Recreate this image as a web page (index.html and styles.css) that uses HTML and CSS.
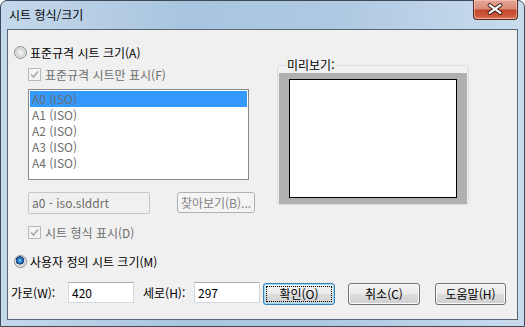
FILE: index.html
```html
<!DOCTYPE html>
<html lang="ko">
<head>
    <meta charset="utf-8">
    <title>시트 형식/크기</title>
    <link rel="stylesheet" href="styles.css">
</head>
<body>
<div class="window">
    <div class="titlebar">
        <span class="title">시트 형식/크기</span>
        <span class="close">
            <svg width="45" height="20" viewBox="0 0 45 20">
                <path d="M17 6 L28 14 M28 6 L17 14" stroke="#3a1a14" stroke-width="4.2" stroke-linecap="round"/>
                <path d="M17 6 L28 14 M28 6 L17 14" stroke="#fff" stroke-width="2.2" stroke-linecap="round"/>
            </svg>
        </span>
    </div>

    <div class="client">
        <div class="main">
            <div class="left">
                <div class="opt first"><span class="radio"></span>표준규격 시트 크기(A)</div>

                <div class="opt sub disabled">
                    <span class="check"><svg width="11" height="11" viewBox="0 0 11 11"><path d="M2 5.5 L4.5 8 L9 2.5" fill="none" stroke="#a8a8a8" stroke-width="1.6"/></svg></span>표준규격 시트만 표시(F)
                </div>

                <div class="listbox">
                    <div class="item sel">A0 (ISO)</div>
                    <div class="item">A1 (ISO)</div>
                    <div class="item">A2 (ISO)</div>
                    <div class="item">A3 (ISO)</div>
                    <div class="item">A4 (ISO)</div>
                </div>

                <div class="filerow">
                    <div class="field">a0 - iso.slddrt</div>
                    <div class="browse">찾아보기(B)...</div>
                </div>

                <div class="opt sub disabled gapD">
                    <span class="check"><svg width="11" height="11" viewBox="0 0 11 11"><path d="M2 5.5 L4.5 8 L9 2.5" fill="none" stroke="#a8a8a8" stroke-width="1.6"/></svg></span>시트 형식 표시(D)
                </div>

                <div class="opt gapM"><span class="radio on"></span>사용자 정의 시트 크기(M)</div>
            </div>

            <div class="preview">
                <span class="legend">미리보기:</span>
                <div class="paper">
                    <div class="sheet"></div>
                </div>
            </div>
        </div>

        <div class="bottom">
            <span class="lbl w1">가로(W):</span>
            <div class="input">420</div>
            <span class="lbl w2">세로(H):</span>
            <div class="input">297</div>
            <div class="btn default b1">확인(O)</div>
            <div class="btn b2">취소(C)</div>
            <div class="btn b3">도움말(H)</div>
        </div>
    </div>
</div>
</body>
</html>
```

FILE: styles.css
```css
* {
    margin: 0;
    padding: 0;
    box-sizing: border-box;
}

body {
    width: 525px;
    height: 327px;
    overflow: hidden;
    background: #fff;
    font-family: "Noto Sans CJK KR", "Noto Sans", sans-serif;
    font-size: 12px;
    color: #000;
}

.window {
    width: 525px;
    height: 327px;
    border: 1px solid #3e4a58;
    border-radius: 7px 7px 0 0;
    background: linear-gradient(to right, #c4d8eb 0%, #a9c5df 35%, #afc9e2 65%, #c9dcee 100%);
    padding: 0 6px 6px;
    display: flex;
    flex-direction: column;
}

.titlebar {
    height: 28px;
    display: flex;
    align-items: flex-start;
    flex: none;
}

.title {
    line-height: 28px;
    padding-left: 2px;
}

.close {
    margin-left: auto;
    margin-top: -1px;
    width: 45px;
    height: 20px;
    border: 1px solid #5a2a22;
    border-top: none;
    border-radius: 0 0 4px 4px;
    background: linear-gradient(#e6a596 0%, #d98a76 48%, #c4452a 52%, #cd5a3c 85%, #e0866a 100%);
    box-shadow: inset 0 0 0 1px rgba(255, 220, 210, 0.45);
    display: flex;
}

.close svg {
    margin: -1px 0 0 -1px;
}

.client {
    flex: 1;
    border: 1px solid #5a6676;
    background: #f0f0f0;
}

.main {
    display: flex;
    padding-left: 6px;
}

.left {
    width: 248px;
}

/* options */
.opt {
    display: flex;
    align-items: center;
    height: 15px;
    line-height: 15px;
    white-space: nowrap;
}

.opt.first {
    margin-top: 15px;
}

.opt.sub {
    margin-left: 14px;
    margin-top: 7px;
}

.opt.gapD {
    margin-top: 11px;
}

.opt.gapM {
    margin-top: 14px;
}

.disabled {
    color: #6d6d6d;
}

.radio {
    width: 13px;
    height: 13px;
    border-radius: 50%;
    border: 1px solid #8b8b8b;
    margin-right: 3px;
    flex: none;
    background: radial-gradient(circle at 50% 50%, #f2f2f2 0, #e6e6e6 2.5px, #cfcfcf 4.5px, #f4f4f4 5.5px);
}

.radio.on {
    background:
        radial-gradient(circle at 45% 40%, #9fdcff 0, #3a92d6 1.5px, #14508f 3.5px, #0d3a6c 4px, transparent 4.3px),
        radial-gradient(circle at 50% 50%, #f2f2f2 0, #e6e6e6 2.5px, #cfcfcf 4.5px, #f4f4f4 5.5px);
}

.check {
    width: 13px;
    height: 13px;
    border: 1px solid #b8b8b8;
    background: #f4f4f4;
    margin-right: 4px;
    flex: none;
    display: flex;
    align-items: center;
    justify-content: center;
}

/* list */
.listbox {
    margin: 7px 0 0 14px;
    width: 221px;
    height: 91px;
    border: 1px solid #828790;
    background: #fff;
    padding: 1px;
}

.item {
    height: 16px;
    line-height: 16px;
    padding-left: 2px;
    color: #6d6d6d;
}

.item.sel {
    background: #3399ff;
}

/* file row */
.filerow {
    display: flex;
    margin: 12px 0 0 14px;
}

.field {
    width: 122px;
    height: 22px;
    border: 1px solid #c3c6ca;
    border-radius: 2px;
    background: #f0f0f0;
    color: #6d6d6d;
    line-height: 20px;
    padding-left: 3px;
}

.browse {
    margin-left: 27px;
    width: 78px;
    height: 21px;
    border: 1px solid #adb2b5;
    border-radius: 3px;
    background: #f4f4f4;
    color: #838383;
    line-height: 19px;
    text-align: center;
    white-space: nowrap;
}

/* preview */
.preview {
    position: relative;
    margin: 35px 0 0 15px;
    width: 192px;
    height: 140px;
    border: 1px solid #d5dfe5;
    border-radius: 3px;
    padding: 7px 1px 0;
}

.legend {
    position: absolute;
    top: -9px;
    left: 8px;
    padding: 0 1px;
    line-height: 16px;
    background: #f0f0f0;
}

.paper {
    height: 100%;
    background: #b0b0b0;
    padding: 6px 10px;
}

.sheet {
    height: 100%;
    border: 1px solid #000;
    background: #fff;
}

/* bottom row */
.bottom {
    display: flex;
    align-items: flex-start;
    margin-top: 13px;
    padding-left: 3px;
}

.lbl {
    line-height: 21px;
    white-space: nowrap;
}

.w1 {
    width: 57px;
}

.w2 {
    width: 51px;
    margin-left: 9px;
}

.input {
    width: 66px;
    height: 21px;
    border: 1px solid #d5d9df;
    border-top-color: #abadb3;
    background: #fff;
    line-height: 19px;
    padding-left: 3px;
}

.btn {
    margin-top: 1px;
    width: 72px;
    height: 22px;
    border: 1px solid #707070;
    border-radius: 3px;
    background: linear-gradient(#f2f2f2 0%, #ebebeb 48%, #dddddd 52%, #cfcfcf 100%);
    box-shadow: inset 0 0 0 1px #fbfbfb;
    line-height: 20px;
    text-align: center;
    white-space: nowrap;
}

.btn.default {
    border-color: #3c7fb1;
    box-shadow: inset 0 0 0 1px #9bdcfa;
    outline: 1px dotted #000;
    outline-offset: -4px;
}

.b1 {
    margin-left: 3px;
}

.b2 {
    margin-left: 13px;
}

.b3 {
    margin-left: 15px;
    width: 71px;
}
```
